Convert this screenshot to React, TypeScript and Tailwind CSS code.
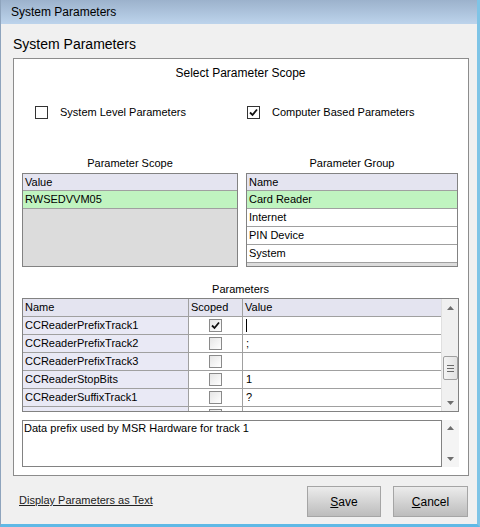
import React from 'react';

const FONT = { fontFamily: '"Liberation Sans", Arial, sans-serif' };

interface ParamRow {
  name: string;
  scoped: boolean;
  value: string;
  cursor?: boolean;
}

const rows: ParamRow[] = [
  { name: 'CCReaderPrefixTrack1', scoped: true, value: '', cursor: true },
  { name: 'CCReaderPrefixTrack2', scoped: false, value: ';' },
  { name: 'CCReaderPrefixTrack3', scoped: false, value: '' },
  { name: 'CCReaderStopBits', scoped: false, value: '1' },
  { name: 'CCReaderSuffixTrack1', scoped: false, value: '?' },
  { name: 'CCReaderSuffixTrack2', scoped: false, value: '?' },
];

const groups = ['Card Reader', 'Internet', 'PIN Device', 'System'];

const CheckBox: React.FC<{ checked?: boolean; className?: string }> = ({ checked, className }) => (
  <div
    className={`w-[13px] h-[13px] border border-[#333] bg-white flex items-center justify-center ${className || ''}`}
  >
    {checked && (
      <svg width="9" height="9" viewBox="0 0 9 9">
        <path d="M1 4.5 L3.5 7 L8 1.5" fill="none" stroke="#111" strokeWidth="1.8" />
      </svg>
    )}
  </div>
);

const GridCheck: React.FC<{ checked?: boolean }> = ({ checked }) => (
  <div className="w-[13px] h-[13px] border border-[#8a8a8a] bg-gradient-to-br from-[#e6e6e6] to-white flex items-center justify-center">
    {checked && (
      <svg width="9" height="9" viewBox="0 0 9 9">
        <path d="M1 4.5 L3.5 7 L8 1.5" fill="none" stroke="#111" strokeWidth="1.8" />
      </svg>
    )}
  </div>
);

const UpArrow = () => (
  <svg width="7" height="4" viewBox="0 0 7 4">
    <path d="M0 4 L3.5 0 L7 4 Z" fill="#6e6e6e" />
  </svg>
);

const DownArrow = () => (
  <svg width="7" height="4" viewBox="0 0 7 4">
    <path d="M0 0 L3.5 4 L7 0 Z" fill="#6e6e6e" />
  </svg>
);

export default function App() {
  return (
    <div
      className="w-[480px] h-[527px] flex flex-col bg-[#f0f0f0] border-l border-l-[#8ea4bd] border-r-[3px] border-r-[#7fc4e6] border-b-[3px] border-b-[#5fb9e6] text-[11px] text-black overflow-hidden"
      style={FONT}
    >
      {/* title bar */}
      <div className="h-[24px] shrink-0 bg-gradient-to-b from-[#9cb2cc] to-[#bdd4ec] flex items-center pl-[10px] text-[12px]">
        System Parameters
      </div>

      <div className="flex-1 flex flex-col pl-[12px] pr-[8px]">
        <div className="h-[34px] pt-[12px] text-[14px] leading-[16px]">System Parameters</div>

        {/* main panel */}
        <div className="h-[418px] border border-[#8c8c8c] bg-white flex flex-col pl-[8px] pr-[9px]">
          <div className="pt-[7px] h-[21px] text-center text-[12px] leading-[14px]">Select Parameter Scope</div>

          <div className="mt-[25px] h-[14px] flex items-center">
            <CheckBox className="ml-[13px]" />
            <span className="ml-[12px] w-[187px]">System Level Parameters</span>
            <CheckBox checked />
            <span className="ml-[12px]">Computer Based Parameters</span>
          </div>

          <div className="mt-[37px] flex gap-[8px]">
            {/* parameter scope */}
            <div className="w-[216px] flex flex-col">
              <div className="h-[14px] leading-[14px] text-center">Parameter Scope</div>
              <div className="mt-[3px] h-[94px] border border-[#828282] bg-[#dcdcdc] flex flex-col">
                <div className="h-[17px] bg-[#e4e4f0] border-b border-[#a0a0a0] flex items-center pl-[2px]">Value</div>
                <div className="h-[18px] bg-[#c0f4c0] border-b border-[#a0a0a0] flex items-center pl-[2px]">RWSEDVVM05</div>
              </div>
            </div>
            {/* parameter group */}
            <div className="w-[212px] flex flex-col">
              <div className="h-[14px] leading-[14px] text-center">Parameter Group</div>
              <div className="mt-[3px] h-[94px] border border-[#828282] bg-[#dcdcdc] flex flex-col">
                <div className="h-[17px] bg-[#e4e4f0] border-b border-[#a0a0a0] flex items-center pl-[2px]">Name</div>
                {groups.map((g, i) => (
                  <div
                    key={g}
                    className={`h-[18px] border-b border-[#a0a0a0] flex items-center pl-[2px] ${i === 0 ? 'bg-[#c0f4c0]' : 'bg-white'}`}
                  >
                    {g}
                  </div>
                ))}
              </div>
            </div>
          </div>

          <div className="mt-[15px] h-[14px] leading-[14px] text-center">Parameters</div>

          {/* parameters grid */}
          <div className="mt-[2px] h-[114px] w-[437px] border border-[#828282] flex overflow-hidden">
            <div className="flex-1 flex flex-col overflow-hidden">
              <div className="h-[18px] shrink-0 flex bg-[#e4e4f0] border-b border-[#a0a0a0]">
                <div className="w-[166px] border-r border-[#a0a0a0] flex items-center pl-[2px]">Name</div>
                <div className="w-[54px] border-r border-[#a0a0a0] flex items-center pl-[2px]">Scoped</div>
                <div className="flex-1 flex items-center pl-[2px]">Value</div>
              </div>
              {rows.map((r) => (
                <div key={r.name} className="h-[18px] shrink-0 flex border-b border-[#a0a0a0]">
                  <div className="w-[166px] bg-[#e9e9f5] border-r border-[#a0a0a0] flex items-center pl-[2px]">
                    {r.name}
                  </div>
                  <div className="w-[54px] bg-white border-r border-[#a0a0a0] flex items-center justify-center">
                    <GridCheck checked={r.scoped} />
                  </div>
                  <div className="flex-1 bg-white flex items-center pl-[3px]">
                    {r.cursor ? <div className="w-px h-[13px] bg-black" /> : r.value}
                  </div>
                </div>
              ))}
            </div>
            {/* scrollbar */}
            <div className="w-[17px] shrink-0 bg-[#f0f0f0] border-l border-[#e0e0e0] flex flex-col items-center">
              <div className="h-[17px] flex items-center justify-center"><UpArrow /></div>
              <div className="mt-[40px] w-[15px] h-[24px] border border-[#a0a0a0] rounded-[2px] bg-gradient-to-r from-[#f4f4f4] to-[#e2e2e2] flex flex-col items-center justify-center gap-[2px]">
                <div className="w-[7px] h-px bg-[#6a6a6a]" />
                <div className="w-[7px] h-px bg-[#6a6a6a]" />
                <div className="w-[7px] h-px bg-[#6a6a6a]" />
              </div>
              <div className="flex-1" />
              <div className="h-[17px] flex items-center justify-center"><DownArrow /></div>
            </div>
          </div>

          {/* description */}
          <div className="mt-[8px] h-[47px] w-[437px] flex">
            <div className="w-[420px] border border-[#828282] bg-white pl-[1px] pt-[1px] leading-[13px]">
              Data prefix used by MSR Hardware for track 1
            </div>
            <div className="w-[17px] bg-[#f4f4f4] flex flex-col items-center justify-between py-[6px]">
              <UpArrow />
              <DownArrow />
            </div>
          </div>
        </div>

        {/* bottom row */}
        <div className="flex items-start mt-[10px]">
          <div className="mt-[6px] ml-[6px] underline text-[#222] text-[11px]">Display Parameters as Text</div>
          <div className="flex-1" />
          <button className="w-[74px] h-[31px] border border-[#a5a5a5] bg-gradient-to-b from-[#ececec] to-[#bcbcbc] text-[12px]">
            <span className="underline">S</span>ave
          </button>
          <button className="ml-[12px] w-[75px] h-[31px] border border-[#a5a5a5] bg-gradient-to-b from-[#ececec] to-[#bcbcbc] text-[12px] mr-[1px]">
            <span className="underline">C</span>ancel
          </button>
        </div>
      </div>
    </div>
  );
}
